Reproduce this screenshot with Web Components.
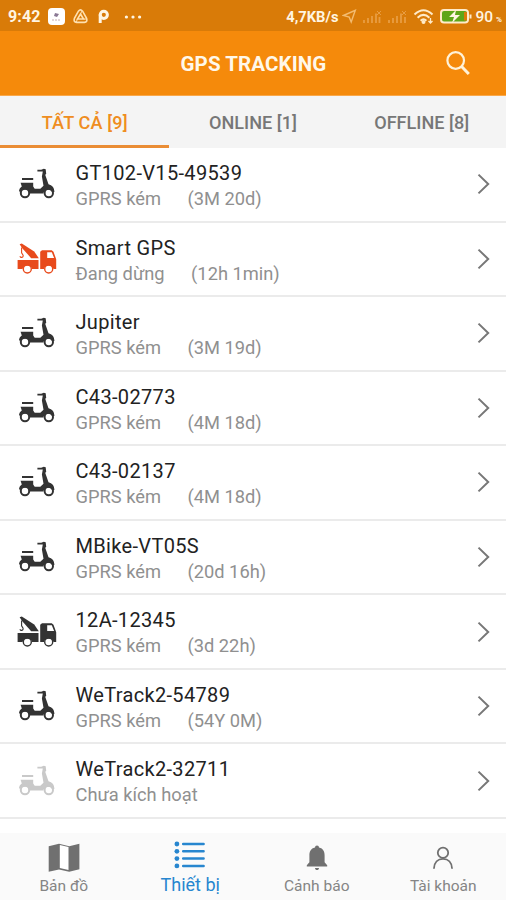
<!DOCTYPE html>
<html lang="vi">
<head>
<meta charset="utf-8">
<title>GPS Tracking</title>
<style>
  html, body { margin: 0; height: 100%; }
  body { font-family: Roboto, "Noto Sans", sans-serif; background: #fff; overflow: hidden; }
</style>
</head>
<body>
<tracking-app></tracking-app>

<script>
const define = (name, html, setup) => {
    const template = document.createElement('template');
    template.innerHTML = html;
    customElements.define(name, class extends HTMLElement {
        constructor() {
            super();
            this.attachShadow({ mode: 'open' }).appendChild(template.content.cloneNode(true));
        }

        connectedCallback() {
            if (setup) setup(this, this.shadowRoot);
        }
    });
};

const icons = {
    scooter: `<svg width="40" height="32" viewBox="0 0 40 32" fill="currentColor">
      <path d="M5 9.900h11.200v2.200H5zM3.600 14.800h12.600v3.700l1.500 2.200h5.600l3.200-3-1.600-9.200.9-4.900-5.400-.1V1.700h3.800l2.600-1 1.900.6.5 4.600-1 .8 3.300 9.600c3.600.8 5.800 3.400 5.900 7.700h-2.400a4.700 4.700 0 0 0-8.600 1.600H12.600a4.900 4.900 0 0 0-8.900-2H2c0-2.600 1.200-4.100 2.800-5.200z"/>
      <g fill="none" stroke="currentColor" stroke-width="2"><circle cx="8" cy="25" r="4.200"/><circle cx="31.800" cy="25" r="4.200"/></g>
    </svg>`,
    truck: `<svg width="40" height="32" viewBox="0 0 40 32" fill="currentColor">
      <path d="M2.600 1.300L4.800.6l12.400 7.800 4.600 6.800h-7.600L5.500 5.600z"/>
      <path d="M4.600 4.500v5.300l1.500 2.400c.5 2.600-2.500 2.800-3.200 1" fill="none" stroke="currentColor" stroke-width="1.100"/>
      <path d="M.6 17h20.900v9h-6.400a5 5 0 0 0-9.600 0H.6z"/>
      <path fill-rule="evenodd" d="M23.200 8.700l1.800-1.400h9.700l1.800 1.500 2.700 7.500V26h-2.700a5 5 0 0 0-9.600 0h-3.700zM30.200 9.200v5.900h6.900l-2.300-5.900z"/>
      <g fill="none" stroke="currentColor" stroke-width="1.400"><circle cx="10.300" cy="26" r="4"/><circle cx="31.700" cy="26" r="4"/></g>
    </svg>`,
    map: `<svg width="32" height="30" viewBox="0 0 32 30">
      <path d="M.7 3.200L11 .8l10.200 2.400L31.400.7v25.500l-10.200 2.600L11 26.400.7 28.800z" fill="#707070"/>
      <path d="M11.800 2l8.700 2v23l-8.700-2z" fill="#fff"/>
    </svg>`,
    list: `<svg width="32" height="28" viewBox="0 0 32 28" fill="currentColor">
      <circle cx="2.900" cy="3" r="2.400"/><circle cx="2.900" cy="10.300" r="2.400"/><circle cx="2.900" cy="17.600" r="2.400"/><circle cx="2.900" cy="24.900" r="2.400"/>
      <path d="M9.200 3h20.400M9.200 10.300h20.400M9.200 17.600h20.400M9.200 24.900h20.400" stroke="currentColor" stroke-width="2.500" stroke-linecap="round"/>
    </svg>`,
    bell: `<svg width="22" height="26" viewBox="0 0 22 26" fill="currentColor">
      <path d="M9 2.400a2 2 0 0 1 4 0c4.300 1 5.600 4 5.600 8v6.800l2.600 3.100v1.200H.8v-1.200l2.600-3.100v-6.800c0-4 1.300-7 5.600-8zM9 22.900h4c0 2.700-4 2.700-4 0z"/>
    </svg>`,
    user: `<svg width="22" height="24" viewBox="0 0 22 24" fill="none" stroke="currentColor" stroke-width="1.800">
      <circle cx="11" cy="6.800" r="5.200"/><path d="M1.900 22.700c.3-6.200 4-9.800 9.100-9.800s8.800 3.600 9.100 9.800"/>
    </svg>`
};

define('status-bar', `
  <style>
    :host { display: flex; align-items: center; height: 31px; box-sizing: border-box; padding: 2px 4px 0 8px; background: #d97b08; color: #fff5e2; }
    svg { display: block; flex: none; }
    .clock { font-size: 16px; font-weight: 700; width: 40px; letter-spacing: .1px; }
    .left { display: flex; align-items: center; gap: 8px; }
    .right { display: flex; align-items: center; margin-left: auto; }
    .speed { font-size: 14.7px; font-weight: 700; }
    .battery { font-size: 15.5px; font-weight: 500; margin-left: 2px; }
    .percent { font-size: 8px; font-weight: 700; margin: 5px 0 0 3px; }
  </style>
  <span class="clock">9:42</span>
  <div class="left">
    <svg width="17" height="17" viewBox="0 0 17 17"><rect width="17" height="17" rx="4" fill="#fff"/><path d="M7 5l4 1-2 3-3-1z" fill="#8a7894"/><path d="M4 12h9" stroke="#c6aeb0" stroke-dasharray="2 1"/></svg>
    <svg width="15" height="15" viewBox="0 0 15 15" fill="none" stroke="#ffe1b0" stroke-width="1.600"><path d="M5.400 2.200Q7.500-.4 9.600 2.200l4 7.200q1.100 3.700-2.200 4H3.600q-3.300-.3-2.200-4z"/><path d="M7.500 5l3 5h-6z"/><path d="M4.500 10l-1.300 3M7.500 5l1.500-3M10.500 10h3" stroke-width="1"/></svg>
    <svg width="13" height="15" viewBox="0 0 13 15" style="margin-left:1px" fill="none" stroke="#fff5e2" stroke-width="3"><circle cx="6.800" cy="5.800" r="3.600"/><path d="M3.200 14V5.500"/></svg>
    <svg width="18" height="4" viewBox="0 0 18 4" fill="#fff5e2" style="margin-left:6px"><circle cx="2.400" cy="2" r="1.600"/><circle cx="9" cy="2" r="1.600"/><circle cx="15.600" cy="2" r="1.600"/></svg>
  </div>
  <div class="right">
    <span class="speed">4,7KB/s</span>
    <svg width="15" height="15" viewBox="0 0 15 15" style="margin-left:4px"><path d="M1.400 6.500L13.300 1.300 9.200 13l-2-4.800z" fill="none" stroke="#f3bb70" stroke-width="1.400"/></svg>
    <svg width="48" height="15" viewBox="0 0 48 15" fill="none" stroke="#e89d43" stroke-width="1.800" style="margin-left:4px"><path d="M3 14v-3M7 14V9M11 14V7M15 14V4.500M18.500 14V8M28 14v-3M32 14V9M36 14V7M40 14V4.500M44 14V8"/><path d="M16 2l4 4m0-4l-4 4M41 2l4 4m0-4l-4 4" stroke-width="1"/></svg>
    <svg width="22" height="17" viewBox="0 0 22 17" fill="none" stroke="#ffebc9" stroke-width="2" style="margin-left:4px"><path d="M1.500 6.500q9-8.500 18 0M4.600 9.700q5.900-5.600 11.800 0M7.600 12.700q2.900-2.800 5.800 0"/><circle cx="10.500" cy="14" r="1" fill="#ffebc9"/><path d="M17.500 10v5m-2-2l2 2 2-2" stroke-width="1.300"/></svg>
    <svg width="34" height="17" viewBox="0 0 34 17" style="margin-left:4px"><rect x="2" y="2" width="27" height="12.500" rx="3" fill="#5ea619" stroke="#ffebc9" stroke-width="2"/><path d="M25 4h3v8.500h-3z" fill="#d97b08"/><path d="M31.500 6.500v4" stroke="#ffebc9" stroke-width="2"/><path d="M17 2l-7 7h5l-2 6 8-8h-5z" fill="#fff5e2"/></svg>
    <span class="battery">90</span><span class="percent">%</span>
  </div>
`);

define('title-bar', `
  <style>
    :host { display: grid; grid-template-columns: 90px 1fr 90px; align-items: center; height: 65px; padding-top: 2px; box-sizing: border-box; background: #f58a0b; color: #fff8ea; border-bottom: 1px solid #f9a84a; }
    h1 { grid-column: 2; margin: 0; padding-left: 1px; font-size: 20.5px; font-weight: 700; letter-spacing: .1px; text-align: center; white-space: nowrap; }
    svg { justify-self: end; margin-right: 35px; }
  </style>
  <h1><slot></slot></h1>
  <svg width="26" height="26" viewBox="0 0 26 26" fill="none" stroke="#fff2d8"><circle cx="10.700" cy="9.500" r="8.300" stroke-width="2.200"/><path d="M16.600 15.500l7.200 7.500" stroke-width="3"/></svg>
`);

define('filter-tab', `
  <style>
    :host { display: flex; justify-content: center; align-items: center; height: 52px; box-sizing: border-box; border-bottom: 3px solid transparent; padding-top: 4px; font-size: 18.1px; font-weight: 500; color: #777; white-space: nowrap; }
    :host([active]) { color: #ef8d21; border-color: #ea8d35; letter-spacing: .15px; padding-left: 1px; }
  </style>
  <slot></slot>
`);

define('filter-tabs', `
  <style>
    :host { display: grid; grid-template-columns: repeat(3, 1fr); background: #f4f4f4; }
  </style>
  <slot></slot>
`);

define('device-row', `
  <style>
    :host { display: flex; align-items: center; height: 74.55px; box-sizing: border-box; padding: 0 15px 0 17px; border-bottom: 2px solid #ebebeb; color: #333; }
    :host([state="alert"]) { color: #e84a1c; }
    :host([state="inactive"]) { color: #c9c9c9; }
    .icon { width: 58.5px; height: 32px; }
    .icon svg { display: block; }
    .name { font-size: 20px; line-height: 26px; letter-spacing: .33px; color: #222; }
    .detail { display: flex; gap: 26.5px; font-size: 18.3px; line-height: 26px; color: #909090; }
    .text { flex: 1; padding-top: 3.5px; white-space: nowrap; }
  </style>
  <div class="icon"></div>
  <div class="text">
    <div class="name"></div>
    <div class="detail"><span class="status"></span><span class="time"></span></div>
  </div>
  <svg width="15" height="24" viewBox="0 0 15 24" fill="none" stroke="#777" stroke-width="2"><path d="M2.500 2.600l9.700 9.400-9.700 9.400"/></svg>
`, (host, root) => {
    root.querySelector('.icon').innerHTML = icons[host.getAttribute('icon')];
    root.querySelector('.name').textContent = host.getAttribute('name');
    root.querySelector('.status').textContent = host.getAttribute('status');
    root.querySelector('.time').textContent = host.getAttribute('time') || '';
});

define('nav-item', `
  <style>
    :host { display: flex; flex-direction: column; justify-content: flex-end; align-items: center; height: 67px; box-sizing: border-box; padding: 0 0 3px 1px; color: #707070; font-size: 15.5px; line-height: 22px; white-space: nowrap; }
    :host([active]) { color: #2786cf; font-size: 18px; padding-bottom: 4px; }
    .icon { height: 34px; display: flex; align-items: center; }
    :host([active]) .icon { height: 38px; }
    .label { color: #858585; }
    :host([active]) .label { color: inherit; }
  </style>
  <div class="icon"></div>
  <span class="label"><slot></slot></span>
`, (host, root) => {
    root.querySelector('.icon').innerHTML = icons[host.getAttribute('icon')];
});

define('bottom-nav', `
  <style>
    :host { display: grid; grid-template-columns: repeat(4, 1fr); background: #fafafa; height: 67px; }
  </style>
  <slot></slot>
`);

define('tracking-app', `
  <style>
    :host { display: flex; flex-direction: column; width: 506px; height: 900px; overflow: hidden; background: #fff; }
    main { flex: 1; min-height: 0; overflow: hidden; }
  </style>
  <status-bar></status-bar>
  <title-bar>GPS TRACKING</title-bar>
  <filter-tabs>
    <filter-tab active>TẤT CẢ [9]</filter-tab>
    <filter-tab>ONLINE [1]</filter-tab>
    <filter-tab>OFFLINE [8]</filter-tab>
  </filter-tabs>
  <main>
    <device-row icon="scooter" name="GT102-V15-49539" status="GPRS kém" time="(3M 20d)"></device-row>
    <device-row icon="truck" state="alert" name="Smart GPS" status="Đang dừng" time="(12h 1min)"></device-row>
    <device-row icon="scooter" name="Jupiter" status="GPRS kém" time="(3M 19d)"></device-row>
    <device-row icon="scooter" name="C43-02773" status="GPRS kém" time="(4M 18d)"></device-row>
    <device-row icon="scooter" name="C43-02137" status="GPRS kém" time="(4M 18d)"></device-row>
    <device-row icon="scooter" name="MBike-VT05S" status="GPRS kém" time="(20d 16h)"></device-row>
    <device-row icon="truck" name="12A-12345" status="GPRS kém" time="(3d 22h)"></device-row>
    <device-row icon="scooter" name="WeTrack2-54789" status="GPRS kém" time="(54Y 0M)"></device-row>
    <device-row icon="scooter" state="inactive" name="WeTrack2-32711" status="Chưa kích hoạt"></device-row>
  </main>
  <bottom-nav>
    <nav-item icon="map">Bản đồ</nav-item>
    <nav-item icon="list" active>Thiết bị</nav-item>
    <nav-item icon="bell">Cảnh báo</nav-item>
    <nav-item icon="user">Tài khoản</nav-item>
  </bottom-nav>
`);
</script>
</body>
</html>
